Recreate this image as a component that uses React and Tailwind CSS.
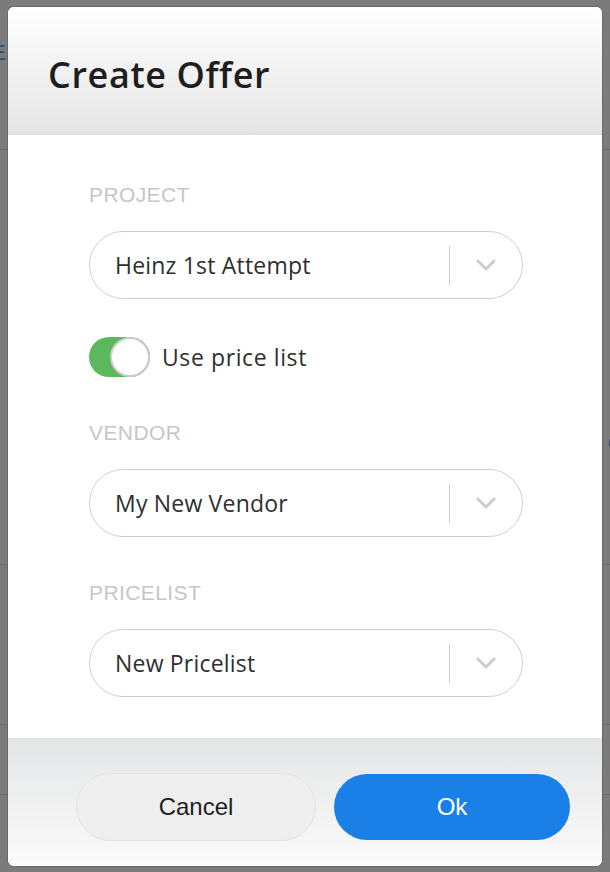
import React, { useState } from 'react';

const Chevron = () => (
  <svg width="20" height="12" viewBox="0 0 20 12" fill="none">
    <path d="M2 2l8 8 8-8" stroke="#cccccc" strokeWidth="3" strokeLinecap="round" strokeLinejoin="round" />
  </svg>
);

const Select = ({ value }) => (
  <div className="w-[434px] h-[68px] rounded-full border border-[#cfcfcf] bg-white flex items-center">
    <div className="flex-1 pl-[25px] text-[23px] text-[#2f2f2f] leading-none tracking-[0.2px]" style={{ fontFamily: '"Open Sans", sans-serif' }}>
      {value}
    </div>
    <div className="w-px h-[39px] bg-[#cccccc]" />
    <div className="w-[72px] flex justify-center items-center">
      <Chevron />
    </div>
  </div>
);

const Label = ({ children }) => (
  <div className="text-[21px] leading-none text-[#c6c6c6] uppercase tracking-[0.4px]">{children}</div>
);

export default function App() {
  const [usePricelist, setUsePricelist] = useState(true);

  return (
    <div className="relative w-[610px] h-[872px] bg-[#7b7b7b] overflow-hidden" style={{ fontFamily: '"Liberation Sans", Arial, sans-serif' }}>
      {/* page behind the overlay */}
      <div className="flex flex-col">
        <div className="h-[150px] border-b border-[#6c6c6c] pt-[36px]">
          <span className="text-[22px] text-[#1f4f7a] -ml-[9px]">E</span>
        </div>
        <div className="h-[415px] border-b border-[#6c6c6c] flex justify-end pt-[275px]">
          <span className="text-[22px] text-[#1f4f7a] -mr-[9px]">c</span>
        </div>
        <div className="h-[160px] border-b border-[#6c6c6c]" />
        <div className="h-[70px] border-b border-[#6c6c6c]" />
      </div>

      {/* modal */}
      <div className="absolute left-[8px] top-[7px] w-[594px] h-[859px] rounded-[6px] bg-white flex flex-col overflow-hidden shadow-[0_0_0_1px_#6a6a6a]">
        <div className="h-[128px] shrink-0 bg-gradient-to-b from-[#ffffff] to-[#e5e5e5] border-b border-[#dde1e4] pl-[40px] pt-[50px]">
          <h1 className="text-[36px] leading-none font-semibold tracking-[0.6px] text-[#1e1e1e]" style={{ fontFamily: '"Open Sans", sans-serif' }}>
            Create Offer
          </h1>
        </div>

        <div className="flex-1 pl-[81px] pt-[49px]">
          <Label>Project</Label>
          <div className="mt-[26px]">
            <Select value="Heinz 1st Attempt" />
          </div>

          <div className="mt-[38px] flex items-center gap-[12px]">
            <button
              onClick={() => setUsePricelist(!usePricelist)}
              className={`relative w-[61px] h-[40px] rounded-full ${usePricelist ? 'bg-[#5cb85c]' : 'bg-[#dddddd]'}`}
            >
              <span
                className={`absolute top-0 w-[40px] h-[40px] rounded-full bg-white border-2 border-[#cbcbcb] ${usePricelist ? 'right-0' : 'left-0'}`}
              />
            </button>
            <span className="text-[23px] text-[#2f2f2f] leading-none tracking-[0.6px]" style={{ fontFamily: '"Open Sans", sans-serif' }}>
              Use price list
            </span>
          </div>

          <div className="mt-[45px]">
            <Label>Vendor</Label>
          </div>
          <div className="mt-[26px]">
            <Select value="My New Vendor" />
          </div>

          <div className="mt-[45px]">
            <Label>Pricelist</Label>
          </div>
          <div className="mt-[26px]">
            <Select value="New Pricelist" />
          </div>
        </div>

        <div className="h-[128px] shrink-0 bg-gradient-to-b from-[#e4e5e6] to-[#fbfbfb] pl-[68px] pt-[35px] flex items-start gap-[18px]">
          <button className="w-[240px] h-[68px] rounded-full bg-[#eeeeee] border border-[#e3e3e3] text-[24px] text-[#1e1e1e]">
            Cancel
          </button>
          <button className="w-[236px] h-[66px] mt-[1px] rounded-full bg-[#1a80e8] text-[24px] text-white">
            Ok
          </button>
        </div>
      </div>
    </div>
  );
}
